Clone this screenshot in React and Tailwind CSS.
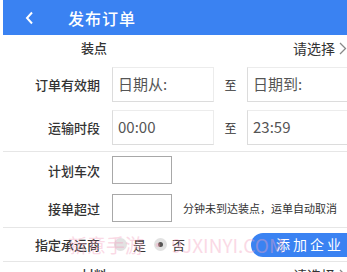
import React from "react";

const font = { fontFamily: '"Noto Sans CJK SC", "Noto Sans", sans-serif' };

function Label({ children }) {
  return (
    <div className="w-[97px] shrink-0 text-right text-[13px] text-[#333] font-medium leading-none">
      {children}
    </div>
  );
}

function Chevron() {
  return (
    <svg width="8" height="13" viewBox="0 0 8 13" className="ml-[4px]">
      <path d="M1 1l5.5 5.5L1 12" fill="none" stroke="#888" strokeWidth="1.3" />
    </svg>
  );
}

function RangeRow({ label, from, to }) {
  return (
    <div className="flex items-center h-[35px]">
      <Label>{label}</Label>
      <div className="ml-[12px] w-[102px] h-[35px] shrink-0 border border-[#ececec] border-l-[#dcdcdc] border-b-[#dcdcdc] flex items-center pl-[5px] text-[15px] text-[#555]">
        {from}
      </div>
      <div className="w-[33px] shrink-0 text-center text-[12px] text-[#333]">至</div>
      <div className="w-[102px] h-[35px] shrink-0 border border-[#ececec] border-l-[#dcdcdc] border-b-[#dcdcdc] flex items-center pl-[5px] text-[15px] text-[#555]">
        {to}
      </div>
    </div>
  );
}

export default function App() {
  return (
    <div className="relative w-[347px] h-[272px] overflow-hidden bg-white pl-[3px]" style={font}>
      {/* header */}
      <div className="h-[35px] bg-[#3a82f2] flex items-center">
        <svg width="9" height="14" viewBox="0 0 9 14" className="ml-[22px]">
          <path d="M7 1.5L2 7l5 5.5" fill="none" stroke="white" strokeWidth="2" />
        </svg>
        <div className="ml-[34px] text-white text-[16px] font-medium tracking-[1px]">发布订单</div>
      </div>

      {/* 装点 */}
      <div className="h-[26px] flex items-center">
        <div className="w-[104px] text-right text-[13px] text-[#333] font-medium">装点</div>
        <div className="ml-auto flex items-center text-[14px] text-[#333]">
          请选择
          <Chevron />
        </div>
      </div>

      <div className="mt-[6px] flex flex-col gap-[8px]">
        <RangeRow label="订单有效期" from="日期从:" to="日期到:" />
        <RangeRow label="运输时段" from="00:00" to="23:59" />
      </div>

      <div className="mt-[6px] h-px bg-[#e6e6e6]" />

      <div className="mt-[4px] flex flex-col gap-[10px]">
        <div className="flex items-center h-[28px]">
          <Label>计划车次</Label>
          <div className="ml-[12px] w-[60px] h-[28px] border border-[#a8a8a8]" />
        </div>
        <div className="flex items-center h-[28px]">
          <Label>接单超过</Label>
          <div className="ml-[12px] w-[60px] h-[28px] border border-[#a8a8a8]" />
          <div className="ml-[11px] text-[11px] text-[#333] whitespace-nowrap">分钟未到达装点，运单自动取消</div>
        </div>
      </div>

      <div className="mt-[5px] h-px bg-[#e6e6e6]" />

      {/* 指定承运商 */}
      <div className="h-[33px] flex items-center">
        <Label>指定承运商</Label>
        <div className="ml-[14px] w-[13px] h-[13px] rounded-full bg-[#e2e2e2]" />
        <div className="ml-[6px] text-[13px] text-[#333]">是</div>
        <div className="ml-[8px] w-[13px] h-[13px] rounded-full bg-[#e2e2e2] flex items-center justify-center">
          <div className="w-[5px] h-[5px] rounded-full bg-[#555]" />
        </div>
        <div className="ml-[5px] text-[13px] text-[#333]">否</div>
        <div className="ml-auto -mr-[10px] h-[24px] w-[106px] rounded-l-full bg-[#3a82f2] flex items-center pl-[25px] text-white text-[14px] tracking-[3px]">
          添加企业
        </div>
      </div>

      <div className="h-px bg-[#e6e6e6]" />

      {/* 材料 */}
      <div className="h-[26px] flex items-center">
        <div className="w-[104px] text-right text-[13px] text-[#333] font-medium">材料</div>
        <div className="ml-auto flex items-center text-[14px] text-[#333]">
          请选择
          <Chevron />
        </div>
      </div>

      {/* watermark */}
      <div className="absolute left-[68px] top-[231px] text-[19px] text-[#f5a3c0] opacity-40 whitespace-nowrap pointer-events-none">
        新意手游 • 9JXINYI.COM
      </div>
    </div>
  );
}
